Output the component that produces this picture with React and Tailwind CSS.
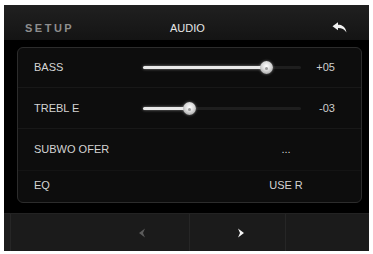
import React from "react";

const font = { fontFamily: '"Liberation Sans", Arial, sans-serif' };

function Slider({ pos }) {
  // pos = thumb centre in px from track start (track is 158px wide)
  return (
    <div className="relative w-[158px] h-[14px] flex items-center">
      <div className="absolute left-0 right-0 h-[3px] rounded-full bg-[#1e1e1e]" />
      <div
        className="absolute left-0 h-[3px] rounded-full bg-[#e8e8e8] shadow-[0_0_3px_rgba(255,255,255,0.5)]"
        style={{ width: pos }}
      />
      <div
        className="absolute w-[13px] h-[13px] rounded-full bg-[radial-gradient(circle_at_50%_40%,#ffffff_0%,#d8d8d8_45%,#8a8a8a_100%)] shadow-[0_0_3px_rgba(255,255,255,0.4)]"
        style={{ left: pos - 6 }}
      >
        <div className="absolute left-[5px] top-[6px] w-[3px] h-[3px] rounded-full bg-[#9a9a9a]" />
      </div>
    </div>
  );
}

function SliderRow({ label, pos, value, h }) {
  return (
    <div className={`flex items-center pl-[16px] ${h} border-b border-[#181818]`}>
      <span className="w-[109px] text-[11px] text-[#d4d4d4]">{label}</span>
      <Slider pos={pos} />
      <span className="w-[34px] text-right text-[11px] text-[#cfcfcf]">{value}</span>
    </div>
  );
}

function TextRow({ label, value, h, extra }) {
  return (
    <div className={`flex items-center pl-[16px] ${h} ${extra}`}>
      <span className="w-[233px] text-[11px] text-[#d4d4d4]">{label}</span>
      <span className="w-[38px] text-center text-[11px] text-[#d4d4d4]">{value}</span>
    </div>
  );
}

export default function App() {
  return (
    <div className="w-[373px] h-[254px] bg-white pt-[5px] pl-[4px]" style={font}>
      <div className="w-[365px] h-[246px] bg-black flex flex-col">
        {/* header */}
        <div className="h-[35px] pt-[11px] flex items-center bg-gradient-to-b from-[#202020] to-[#141414]">
          <span className="w-[166px] pl-[21px] text-[11px] font-bold tracking-[2.5px] text-[#8e8e8e]">
            SETUP
          </span>
          <span className="text-[11px] text-[#e6e6e6]">AUDIO</span>
          <div className="flex-1 flex justify-end pr-[22px] pb-[1px]">
            <svg width="15" height="11" viewBox="0 0 15 11">
              <path d="M0.5 4.2 L6 0.3 L6 2.8 C10 2.8 13.5 4.6 14.5 10.5 C12.5 7.3 10 6 6 6 L6 8.3 Z" fill="#f2f2f2" />
            </svg>
          </div>
        </div>

        {/* settings panel */}
        <div className="h-[173px] pt-[7px] pl-[13px] pr-[7px] pb-[10px]">
          <div className="h-full rounded-[6px] border border-[#2c2c2c] bg-[#0d0d0d] flex flex-col">
            <SliderRow label="BASS" pos={123} value="+05" h="h-[40px]" />
            <SliderRow label="TREBL E" pos={46} value="-03" h="h-[41px]" />
            <TextRow label="SUBWO OFER" value="..." h="h-[42px]" extra="border-b border-[#141414]" />
            <TextRow label="EQ" value="USE R" h="flex-1" extra="items-start pt-[6px]" />
          </div>
        </div>

        {/* bottom nav */}
        <div className="flex-1 flex bg-[#1b1b1b] border-t border-[#232323]">
          <div className="w-[6px]" />
          <div className="w-[179px] border-l border-[#262626] flex items-center pl-[127px]">
            <svg width="8" height="10" viewBox="0 0 8 10">
              <path d="M7 0.5 L1 5 L7 9.5 L5 5 Z" fill="#5c5c5c" />
            </svg>
          </div>
          <div className="w-[96px] border-l border-[#262626] flex items-center pl-[47px]">
            <svg width="8" height="10" viewBox="0 0 8 10">
              <path d="M1 0.5 L7 5 L1 9.5 L3 5 Z" fill="#f4f4f4" />
            </svg>
          </div>
          <div className="flex-1 border-l border-[#262626]" />
        </div>
      </div>
    </div>
  );
}
